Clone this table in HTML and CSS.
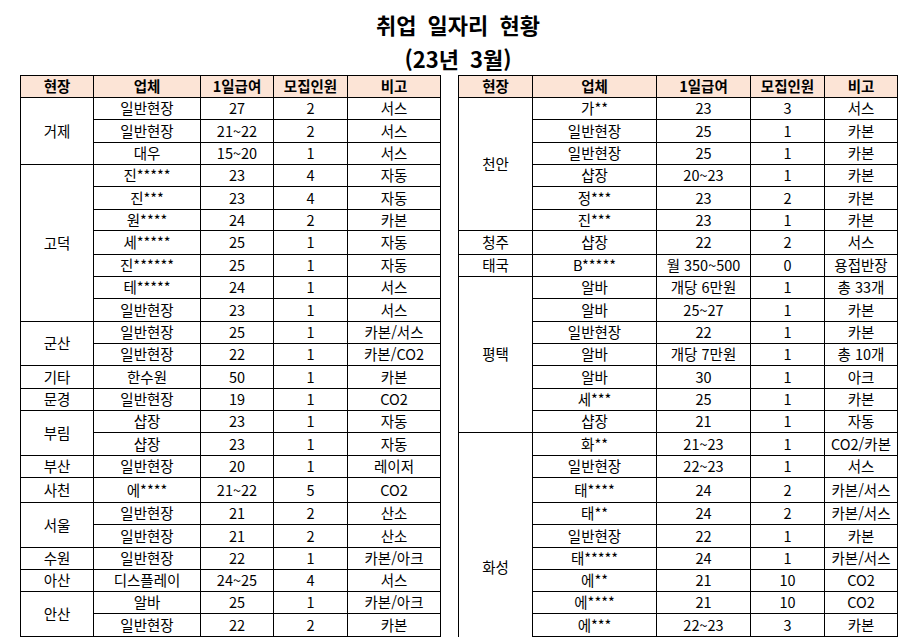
FILE: index.html
```html
<!DOCTYPE html>
<html lang="ko">
<head>
<meta charset="utf-8">
<title>취업 일자리 현황</title>
<link rel="stylesheet" href="styles.css">
</head>
<body>
<div class="page">
  <h1 class="title">취업 일자리 현황<br>(23년 3월)</h1>
  <div class="tables">
    <table class="grid left">
      <colgroup><col class="c1"><col class="c2"><col class="c3"><col class="c4"><col class="c5"></colgroup>
      <thead>
        <tr class="hd"><th>현장</th><th>업체</th><th>1일급여</th><th>모집인원</th><th>비고</th></tr>
      </thead>
      <tbody>
        <tr class="r22"><td rowspan="3">거제</td><td>일반현장</td><td>27</td><td>2</td><td>서스</td></tr>
        <tr class="r23"><td>일반현장</td><td>21~22</td><td>2</td><td>서스</td></tr>
        <tr class="r22"><td>대우</td><td>15~20</td><td>1</td><td>서스</td></tr>
        <tr class="r22"><td rowspan="7">고덕</td><td>진*****</td><td>23</td><td>4</td><td>자동</td></tr>
        <tr class="r23"><td>진***</td><td>23</td><td>4</td><td>자동</td></tr>
        <tr class="r21"><td>원****</td><td>24</td><td>2</td><td>카본</td></tr>
        <tr class="r24"><td>세*****</td><td>25</td><td>1</td><td>자동</td></tr>
        <tr class="r22"><td>진******</td><td>25</td><td>1</td><td>자동</td></tr>
        <tr class="r22"><td>테*****</td><td>24</td><td>1</td><td>서스</td></tr>
        <tr class="r23"><td>일반현장</td><td>23</td><td>1</td><td>서스</td></tr>
        <tr class="r22"><td rowspan="2">군산</td><td>일반현장</td><td>25</td><td>1</td><td>카본/서스</td></tr>
        <tr class="r22"><td>일반현장</td><td>22</td><td>1</td><td>카본/CO2</td></tr>
        <tr class="r23"><td>기타</td><td>한수원</td><td>50</td><td>1</td><td>카본</td></tr>
        <tr class="r22"><td>문경</td><td>일반현장</td><td>19</td><td>1</td><td>CO2</td></tr>
        <tr class="r22"><td rowspan="2">부림</td><td>샵장</td><td>23</td><td>1</td><td>자동</td></tr>
        <tr class="r23"><td>샵장</td><td>23</td><td>1</td><td>자동</td></tr>
        <tr class="r22"><td>부산</td><td>일반현장</td><td>20</td><td>1</td><td>레이저</td></tr>
        <tr class="r25"><td>사천</td><td>에****</td><td>21~22</td><td>5</td><td>CO2</td></tr>
        <tr class="r22"><td rowspan="2">서울</td><td>일반현장</td><td>21</td><td>2</td><td>산소</td></tr>
        <tr class="r23"><td>일반현장</td><td>21</td><td>2</td><td>산소</td></tr>
        <tr class="r22"><td>수원</td><td>일반현장</td><td>22</td><td>1</td><td>카본/아크</td></tr>
        <tr class="r22"><td>아산</td><td>디스플레이</td><td>24~25</td><td>4</td><td>서스</td></tr>
        <tr class="r22"><td rowspan="2">안산</td><td>알바</td><td>25</td><td>1</td><td>카본/아크</td></tr>
        <tr class="r23"><td>일반현장</td><td>22</td><td>2</td><td>카본</td></tr>
      </tbody>
    </table>
    <table class="grid right">
      <colgroup><col class="d1"><col class="d2"><col class="d3"><col class="d4"><col class="d5"></colgroup>
      <thead>
        <tr class="hd"><th>현장</th><th>업체</th><th>1일급여</th><th>모집인원</th><th>비고</th></tr>
      </thead>
      <tbody>
        <tr class="r22"><td rowspan="6">천안</td><td>가**</td><td>23</td><td>3</td><td>서스</td></tr>
        <tr class="r23"><td>일반현장</td><td>25</td><td>1</td><td>카본</td></tr>
        <tr class="r22"><td>일반현장</td><td>25</td><td>1</td><td>카본</td></tr>
        <tr class="r22"><td>샵장</td><td>20~23</td><td>1</td><td>카본</td></tr>
        <tr class="r23"><td>정***</td><td>23</td><td>2</td><td>카본</td></tr>
        <tr class="r21"><td>진***</td><td>23</td><td>1</td><td>카본</td></tr>
        <tr class="r24"><td>청주</td><td>샵장</td><td>22</td><td>2</td><td>서스</td></tr>
        <tr class="r22"><td>태국</td><td>B*****</td><td>월 350~500</td><td>0</td><td>용접반장</td></tr>
        <tr class="r22"><td rowspan="7">평택</td><td>알바</td><td>개당 6만원</td><td>1</td><td>총 33개</td></tr>
        <tr class="r23"><td>알바</td><td>25~27</td><td>1</td><td>카본</td></tr>
        <tr class="r22"><td>일반현장</td><td>22</td><td>1</td><td>카본</td></tr>
        <tr class="r22"><td>알바</td><td>개당 7만원</td><td>1</td><td>총 10개</td></tr>
        <tr class="r23"><td>알바</td><td>30</td><td>1</td><td>아크</td></tr>
        <tr class="r22"><td>세***</td><td>25</td><td>1</td><td>카본</td></tr>
        <tr class="r22"><td>샵장</td><td>21</td><td>1</td><td>자동</td></tr>
        <tr class="r23"><td rowspan="9" class="open">화성</td><td>화**</td><td>21~23</td><td>1</td><td>CO2/카본</td></tr>
        <tr class="r22"><td>일반현장</td><td>22~23</td><td>1</td><td>서스</td></tr>
        <tr class="r25"><td>태****</td><td>24</td><td>2</td><td>카본/서스</td></tr>
        <tr class="r22"><td>태**</td><td>24</td><td>2</td><td>카본/서스</td></tr>
        <tr class="r23"><td>일반현장</td><td>22</td><td>1</td><td>카본</td></tr>
        <tr class="r22"><td>태*****</td><td>24</td><td>1</td><td>카본/서스</td></tr>
        <tr class="r22"><td>에**</td><td>21</td><td>10</td><td>CO2</td></tr>
        <tr class="r22"><td>에****</td><td>21</td><td>10</td><td>CO2</td></tr>
        <tr class="r23"><td>에***</td><td>22~23</td><td>3</td><td>카본</td></tr>
      </tbody>
    </table>
  </div>
</div>
</body>
</html>
```

FILE: styles.css
```css
html, body {
  margin: 0;
  padding: 0;
  background: #ffffff;
}

body {
  font-family: "Noto Sans CJK KR", "Noto Sans", sans-serif;
  color: #000000;
}

.page {
  width: 916px;
}

.title {
  margin: 0;
  padding-top: 7px;
  font-size: 22px;
  line-height: 34px;
  font-weight: 700;
  text-align: center;
  word-spacing: 5px;
}

.tables {
  display: flex;
  align-items: flex-start;
  gap: 17px;
  padding-left: 20px;
}

.grid {
  border-collapse: collapse;
  table-layout: fixed;
  font-size: 14.5px;
}

.grid th,
.grid td {
  border: 1px solid #000000;
  padding: 0;
  text-align: center;
  vertical-align: middle;
  white-space: nowrap;
  line-height: 1;
}

.grid th {
  background: #fce4d6;
  font-weight: 700;
}

/* merged cell continues below the visible area */
.grid td.open {
  border-bottom-color: transparent;
  padding-top: 66px;
}

.left { width: 420px; }
.c1 { width: 73px; }
.c2 { width: 107px; }
.c3 { width: 73px; }
.c4 { width: 74px; }
.c5 { width: 93px; }

.right { width: 439px; }
.d1 { width: 74px; }
.d2 { width: 124px; }
.d3 { width: 94px; }
.d4 { width: 74px; }
.d5 { width: 73px; }

.hd { height: 22px; }
.r21 { height: 21px; }
.r22 { height: 22px; }
.r23 { height: 23px; }
.r24 { height: 24px; }
.r25 { height: 25px; }
```
